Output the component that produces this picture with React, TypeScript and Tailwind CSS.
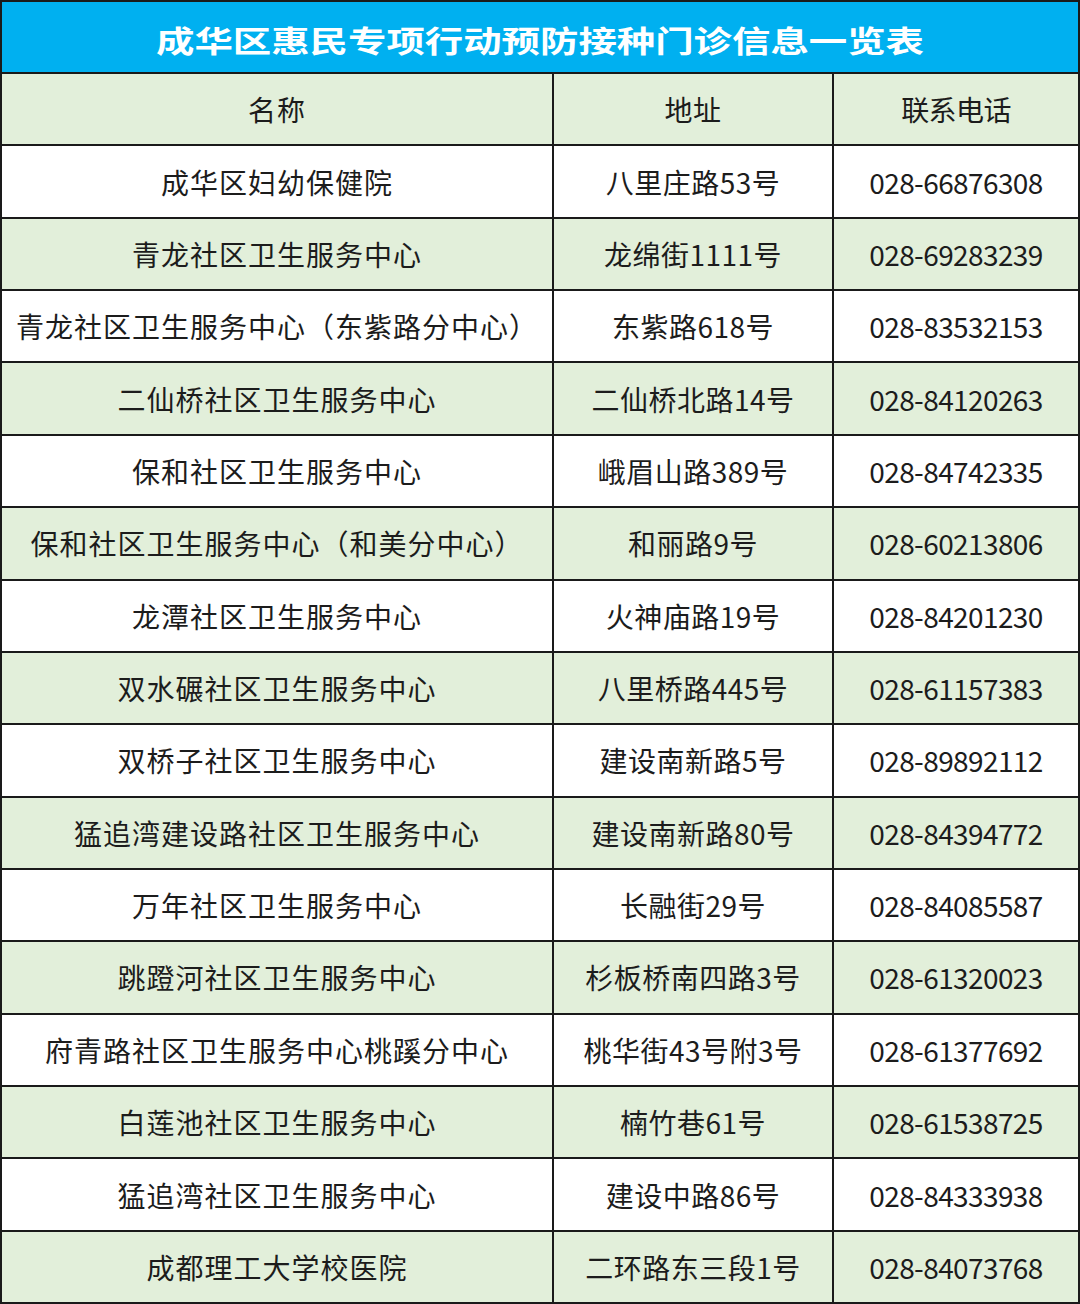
const rows: [string, string, string][] = [
  ["成华区妇幼保健院", "八里庄路53号", "028-66876308"],
  ["青龙社区卫生服务中心", "龙绵街1111号", "028-69283239"],
  ["青龙社区卫生服务中心（东紫路分中心）", "东紫路618号", "028-83532153"],
  ["二仙桥社区卫生服务中心", "二仙桥北路14号", "028-84120263"],
  ["保和社区卫生服务中心", "峨眉山路389号", "028-84742335"],
  ["保和社区卫生服务中心（和美分中心）", "和丽路9号", "028-60213806"],
  ["龙潭社区卫生服务中心", "火神庙路19号", "028-84201230"],
  ["双水碾社区卫生服务中心", "八里桥路445号", "028-61157383"],
  ["双桥子社区卫生服务中心", "建设南新路5号", "028-89892112"],
  ["猛追湾建设路社区卫生服务中心", "建设南新路80号", "028-84394772"],
  ["万年社区卫生服务中心", "长融街29号", "028-84085587"],
  ["跳蹬河社区卫生服务中心", "杉板桥南四路3号", "028-61320023"],
  ["府青路社区卫生服务中心桃蹊分中心", "桃华街43号附3号", "028-61377692"],
  ["白莲池社区卫生服务中心", "楠竹巷61号", "028-61538725"],
  ["猛追湾社区卫生服务中心", "建设中路86号", "028-84333938"],
  ["成都理工大学校医院", "二环路东三段1号", "028-84073768"],
];

function Row({ cells, green, last }: { cells: [string, string, string]; green: boolean; last?: boolean }) {
  return (
    <div
      className={`flex-1 grid grid-cols-[552px_280px_1fr] ${green ? "bg-[#e2efda]" : "bg-white"} ${
        last ? "" : "border-b-2 border-[#1a1a1a]"
      }`}
    >
      <div className="flex items-center justify-center border-r-2 border-[#1a1a1a] whitespace-nowrap tracking-[1px]">
        {cells[0]}
      </div>
      <div className="flex items-center justify-center border-r-2 border-[#1a1a1a] whitespace-nowrap tracking-[0.5px]">
        {cells[1]}
      </div>
      <div className="flex items-center justify-center whitespace-nowrap tracking-[-0.6px]">{cells[2]}</div>
    </div>
  );
}

export default function App() {
  return (
    <div
      className="w-[1080px] h-[1304px] flex flex-col border-2 border-[#1a1a1a] bg-white text-[28px] text-[#1c1c1c] overflow-hidden"
      style={{ fontFamily: '"Noto Sans CJK SC", "Noto Sans", sans-serif' }}
    >
      {/* Title */}
      <div className="h-[72px] shrink-0 flex items-center justify-center bg-[#00b0f0] border-b-2 border-[#1a1a1a]">
        <h1 className="text-[30px] font-bold text-white scale-x-[1.28] pt-1 whitespace-nowrap">
          成华区惠民专项行动预防接种门诊信息一览表
        </h1>
      </div>

      {/* Table */}
      <Row cells={["名称", "地址", "联系电话"]} green />
      {rows.map((r, i) => (
        <Row key={r[2]} cells={r} green={i % 2 === 1} last={i === rows.length - 1} />
      ))}
    </div>
  );
}
